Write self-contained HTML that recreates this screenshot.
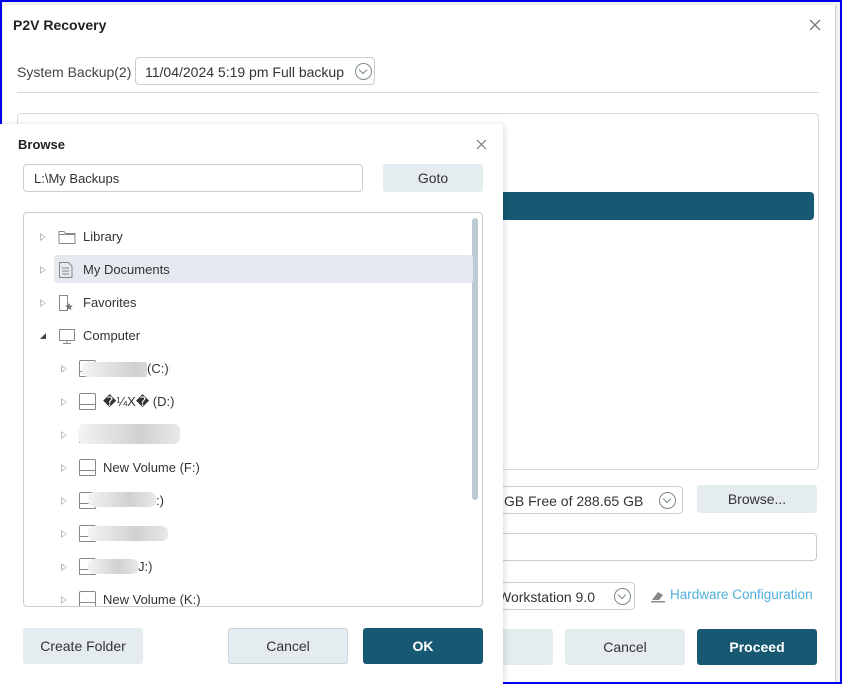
<!DOCTYPE html>
<html><head><meta charset="utf-8"><style>
*{box-sizing:border-box;margin:0;padding:0}
body{width:842px;height:684px;background:#0000ee;position:relative;overflow:hidden;font-family:"Liberation Sans","Noto Sans CJK SC",sans-serif;color:#333;font-size:13px;white-space:nowrap}
.abs{position:absolute}
#win{left:2px;top:2px;width:838px;height:680px;background:#f0f0f0}
#main{left:3px;top:5px;width:833px;height:677px;background:#fff;border-right:1px solid #ccc}
.btn{position:absolute;border-radius:3px;text-align:center;font-size:14px}
.gray{background:#e5ecf0;color:#333}
.dark{background:#175873;color:#fff;font-weight:bold}
.inp{position:absolute;border:1px solid #ccc;border-radius:4px;background:#fff}
.chev{position:absolute;width:17px;height:17px;border:1.3px solid #7a8a88;border-radius:50%}
.chev:after{content:"";position:absolute;left:4px;top:3px;width:5px;height:5px;border-right:1.3px solid #7a8a88;border-bottom:1.3px solid #7a8a88;transform:rotate(45deg)}
.row{position:absolute;left:0;height:28px;font-size:13px;color:#333;line-height:28px;white-space:nowrap}
.row span{white-space:nowrap}
.tri{position:absolute;width:0;height:0;border-left:6px solid #bbb;border-top:4px solid transparent;border-bottom:4px solid transparent}
.tri:after{content:"";position:absolute;left:-5px;top:-2.5px;border-left:4px solid #fff;border-top:2.5px solid transparent;border-bottom:2.5px solid transparent}
.drv{position:absolute;width:17px;height:17px;border:1px solid #888;border-radius:2px 2px 1px 1px}
.drv:after{content:"";position:absolute;left:-1px;right:-1px;top:10px;border-top:1px solid #888}
.blur{position:absolute;height:15px;background:linear-gradient(90deg,#f4f4f4,#e2e2e2 30%,#d0d0d0 60%,#e8e8e8);border-radius:6px}
</style></head><body>
<div id="win" class="abs"></div>
<div id="main" class="abs">
 <div class="abs" style="left:10px;top:12px;font-weight:bold;font-size:14px;color:#222">P2V Recovery</div>
 <svg class="abs" style="left:806px;top:14px" width="12" height="12"><path d="M1 1L11 11M11 1L1 11" stroke="#777" stroke-width="1.3"/></svg>
 <div class="abs" style="left:14px;top:59px;font-size:14px;color:#444">System Backup(2)</div>
 <div class="inp" style="left:132px;top:52px;width:240px;height:28px"><span class="abs" style="left:9px;top:6px;font-size:14px;color:#333">11/04/2024 5:19 pm Full backup</span><div class="chev" style="left:219px;top:5px"></div></div>
 <div class="abs" style="left:14px;top:87px;width:802px;height:1px;background:#d8d8d8"></div>
 <div class="abs" style="left:14px;top:108px;width:802px;height:357px;border:1px solid #d8d8d8;border-radius:4px"></div>
 <div class="abs" style="left:20px;top:187px;width:791px;height:28px;background:#175873;border-radius:4px"></div>
 <div class="inp" style="left:420px;top:481px;width:260px;height:28px"><span class="abs" style="left:80px;top:6px;font-size:14px">GB Free of 288.65 GB</span><div class="chev" style="left:235px;top:5px"></div></div>
 <div class="btn gray" style="left:694px;top:480px;width:120px;height:28px;line-height:28px">Browse...</div>
 <div class="inp" style="left:420px;top:528px;width:394px;height:28px"></div>
 <div class="inp" style="left:420px;top:577px;width:212px;height:28px"><span class="abs" style="left:74px;top:6px;font-size:14px">Workstation 9.0</span><div class="chev" style="left:190px;top:5px"></div></div>
 <svg class="abs" style="left:647px;top:582px" width="16" height="16"><path d="M2 13 L8 5 L13 8 L9 13 Z" fill="#888"/><rect x="1" y="14" width="14" height="1.5" fill="#888"/></svg>
 <div class="abs" style="left:667px;top:582px;font-size:13.5px;color:#4fb0dd">Hardware Configuration</div>
 <div class="btn gray" style="left:430px;top:624px;width:120px;height:36px;line-height:36px">k</div>
 <div class="btn gray" style="left:562px;top:624px;width:120px;height:36px;line-height:36px">Cancel</div>
 <div class="btn dark" style="left:694px;top:624px;width:120px;height:36px;line-height:36px">Proceed</div>
</div>
<div class="abs" style="left:0;top:124px;width:503px;height:560px;background:#fff;box-shadow:2px 0 6px rgba(0,0,0,.12);border-radius:0 4px 0 0">
 <div class="abs" style="left:18px;top:13px;font-weight:bold;font-size:13px;color:#222">Browse</div>
 <svg class="abs" style="left:476px;top:15px" width="11" height="11"><path d="M1 1L10 10M10 1L1 10" stroke="#777" stroke-width="1.2"/></svg>
 <div class="inp" style="left:23px;top:40px;width:340px;height:28px"><span class="abs" style="left:10px;top:6px;font-size:13px">L:\My Backups</span></div>
 <div class="btn gray" style="left:383px;top:40px;width:100px;height:28px;line-height:28px;font-size:14px">Goto</div>
 <div class="abs" style="left:23px;top:88px;width:460px;height:395px;border:1px solid #ccc;border-radius:4px;overflow:hidden">
  <div class="abs" style="left:448px;top:5px;width:6px;height:282px;background:#bccbd3;border-radius:3px"></div>
  <div class="abs" style="left:30px;top:42px;width:419px;height:28px;background:#e5e9f0;border-radius:3px"></div>
  <div class="row" style="top:10px"><div class="tri" style="left:16px;top:10px"></div>
   <svg class="abs" style="left:34px;top:6px" width="18" height="16"><path d="M1 2.5h5l1.5 2H17v10H1z M1 5.5h16" fill="none" stroke="#888"/></svg><span class="abs" style="left:59px">Library</span></div>
  <div class="row" style="top:43px"><div class="tri" style="left:16px;top:10px"></div>
   <svg class="abs" style="left:34px;top:5px" width="16" height="18"><path d="M1.5 1.5h9l3.5 3.5v11.5h-12.5z M4 7h7M4 10h7M4 13h7" fill="none" stroke="#888"/></svg><span class="abs" style="left:59px">My Documents</span></div>
  <div class="row" style="top:76px"><div class="tri" style="left:16px;top:10px"></div>
   <svg class="abs" style="left:34px;top:5px" width="16" height="18"><path d="M1.5 1.5h8v15h-8z M9.5 1.5v15" fill="none" stroke="#888"/><path d="M11 9l1.2 2.5 2.6.3-2 1.8.6 2.6-2.4-1.4-2.4 1.4.6-2.6-2-1.8 2.6-.3z" fill="#777"/></svg><span class="abs" style="left:59px">Favorites</span></div>
  <div class="row" style="top:109px"><div class="abs" style="left:16px;top:11px;width:0;height:0;border-left:6px solid transparent;border-bottom:6px solid #444"></div>
   <svg class="abs" style="left:34px;top:6px" width="18" height="18"><path d="M1.5 1.5h15v11h-15z M9 12.5v3 M5 15.5h8" fill="none" stroke="#888"/></svg><span class="abs" style="left:59px">Computer</span></div>
  <div class="row" style="top:142px"><div class="tri" style="left:37px;top:10px"></div><div class="drv" style="left:55px;top:5px"></div><div class="blur" style="left:58px;top:7px;width:88px"></div><span class="abs" style="left:123px;background:#fff">(C:)</span></div>
  <div class="row" style="top:175px"><div class="tri" style="left:37px;top:10px"></div><div class="drv" style="left:55px;top:5px"></div><span class="abs" style="left:79px">�¼X� (D:)</span></div>
  <div class="row" style="top:208px"><div class="tri" style="left:37px;top:10px"></div><div class="drv" style="left:55px;top:5px"></div><div class="blur" style="left:54px;top:3px;width:102px;height:20px"></div></div>
  <div class="row" style="top:241px"><div class="tri" style="left:37px;top:10px"></div><div class="drv" style="left:55px;top:5px"></div><span class="abs" style="left:79px">New Volume (F:)</span></div>
  <div class="row" style="top:274px"><div class="tri" style="left:37px;top:10px"></div><div class="drv" style="left:55px;top:5px"></div><div class="blur" style="left:64px;top:5px;width:68px"></div><span class="abs" style="left:132px">:)</span></div>
  <div class="row" style="top:307px"><div class="tri" style="left:37px;top:10px"></div><div class="drv" style="left:55px;top:5px"></div><div class="blur" style="left:64px;top:6px;width:80px"></div></div>
  <div class="row" style="top:340px"><div class="tri" style="left:37px;top:10px"></div><div class="drv" style="left:55px;top:5px"></div><div class="blur" style="left:64px;top:6px;width:50px"></div><span class="abs" style="left:114px">J:)</span></div>
  <div class="row" style="top:373px"><div class="tri" style="left:37px;top:10px"></div><div class="drv" style="left:55px;top:5px"></div><span class="abs" style="left:79px">New Volume (K:)</span></div>
 </div>
 <div class="btn gray" style="left:23px;top:504px;width:120px;height:36px;line-height:36px">Create Folder</div>
 <div class="btn gray" style="left:228px;top:504px;width:120px;height:36px;line-height:34px;border:1px solid #ccd4d8">Cancel</div>
 <div class="btn dark" style="left:363px;top:504px;width:120px;height:36px;line-height:36px">OK</div>
</div>
</body></html>
